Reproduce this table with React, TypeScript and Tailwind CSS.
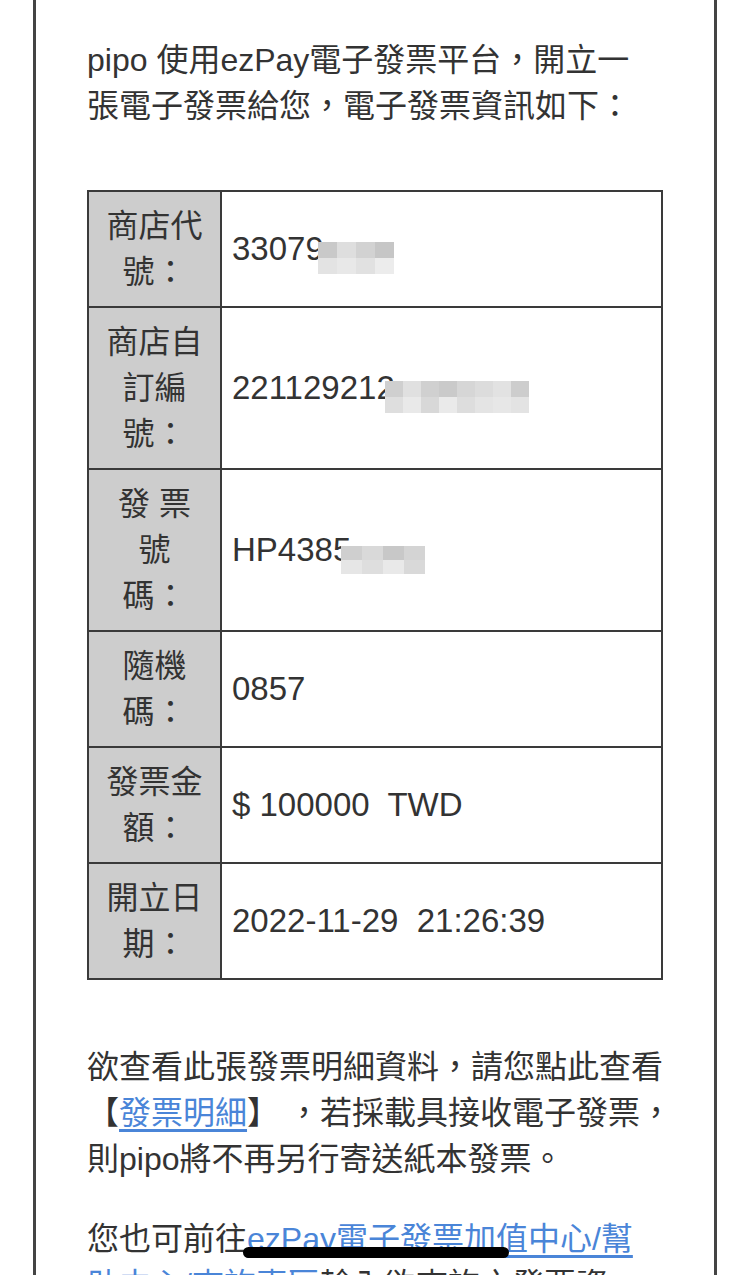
import React from 'react';

type Cell = string[];

// blurred block painted over the hidden part of a number
function Mosaic({ rows, cellW, cellH }: { rows: Cell[]; cellW: string; cellH: string }) {
  return (
    <span className="inline-flex flex-col shrink-0">
      {rows.map((row, i) => (
        <span key={i} className="flex">
          {row.map((c, j) => (
            <span key={j} className={`${cellW} ${cellH}`} style={{ backgroundColor: c }} />
          ))}
        </span>
      ))}
    </span>
  );
}

const rows: { label: string; value: React.ReactNode }[] = [
  {
    label: '商店代號：',
    value: (
      <>
        <span>33079</span>
        <span className="-ml-[6px]">
          <Mosaic
            cellW="w-[19px]"
            cellH="h-[16px]"
            rows={[
              ['#c9c9c9', '#dedede', '#d2d2d2', '#c6c6c6'],
              ['#e3e3e3', '#e8e8e8', '#e1e1e1', '#ececec'],
            ]}
          />
        </span>
      </>
    ),
  },
  {
    label: '商店自訂編號：',
    value: (
      <>
        <span>221129212</span>
        <span className="-ml-[10px]">
          <Mosaic
            cellW="w-[18px]"
            cellH="h-[16px]"
            rows={[
              ['#cfcfcf', '#e0e0e0', '#d0d0d0', '#cacaca', '#d6d6d6', '#dcdcdc', '#e2e2e2', '#cdcdcd'],
              ['#dedede', '#e9e9e9', '#d8d8d8', '#eaeaea', '#dddddd', '#e4e4e4', '#e7e7e7', '#e3e3e3'],
            ]}
          />
        </span>
      </>
    ),
  },
  {
    label: '發 票 號 碼：',
    value: (
      <>
        <span>HP4385</span>
        <span className="-ml-[10px]">
          <Mosaic
            cellW="w-[21px]"
            cellH="h-[14px]"
            rows={[
              ['#cfcfcf', '#d9d9d9', '#c8c8c8', '#d4d4d4'],
              ['#e6e6e6', '#dedede', '#e9e9e9', '#d9d9d9'],
            ]}
          />
        </span>
      </>
    ),
  },
  { label: '隨機碼：', value: <span>0857</span> },
  { label: '發票金額：', value: <span>$ 100000&nbsp; TWD</span> },
  { label: '開立日期：', value: <span>2022-11-29&nbsp; 21:26:39</span> },
];

export default function App() {
  return (
    <div className="relative h-[1275px] overflow-hidden bg-white font-['Liberation_Sans','Noto_Sans_CJK_TC',sans-serif] text-[32px] leading-[46px] text-[#333333]">
      <div className="ml-[33px] h-full w-[684px] border-x-[3px] border-[#444444] pl-[51px] pt-[37px]">
        <p className="whitespace-nowrap">
          pipo 使用ezPay電子發票平台，開立一
          <br />
          張電子發票給您，電子發票資訊如下：
        </p>

        <table className="mt-[61px] w-[576px] table-fixed border-collapse border-2 border-[#3a3a3a]">
          <colgroup>
            <col className="w-[133px]" />
            <col />
          </colgroup>
          <tbody>
            {rows.map((r) => (
              <tr key={r.label}>
                <td className="border-2 border-[#3a3a3a] bg-[#cdcdcd] py-[11px] align-middle">
                  <div className="mx-auto w-[100px] text-center">{r.label}</div>
                </td>
                <td className="border-2 border-[#3a3a3a] py-[11px] pl-[10px] align-middle text-[33px]">
                  <div className="flex items-center whitespace-nowrap">{r.value}</div>
                </td>
              </tr>
            ))}
          </tbody>
        </table>

        <p className="mt-[64px] whitespace-nowrap">
          欲查看此張發票明細資料，請您點此查看
          <br />
          【<a className="text-[#4a85d8] underline underline-offset-[5px]">發票明細</a>】 ，若採載具接收電子發票，
          <br />
          則pipo將不再另行寄送紙本發票。
        </p>

        <p className="mt-[34px] whitespace-nowrap">
          您也可前往
          <a className="text-[#4a85d8] underline underline-offset-[5px]">
            ezPay電子發票加值中心/幫
            <br />
            助中心/查詢專區
          </a>
          輸入欲查詢之發票資
          <br />
          訊。
        </p>
      </div>

      {/* phone home indicator laid over the page */}
      <div className="absolute left-[243px] top-[1247px] h-[11px] w-[266px] rounded-full bg-black" />
    </div>
  );
}
